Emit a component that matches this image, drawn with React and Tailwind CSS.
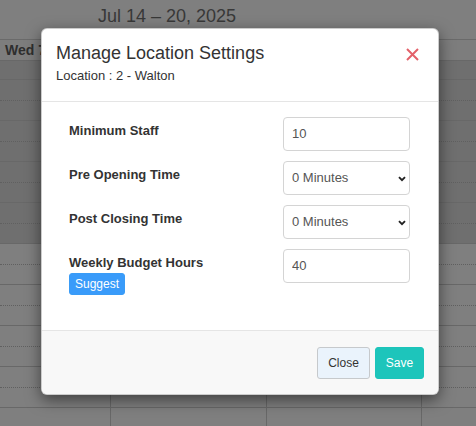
import React from 'react';

const rows = Array.from({ length: 18 }, (_, i) => i);

function CalendarRow({ i }) {
  const dark = i < 9;
  const dotted = i % 2 === 1;
  return (
    <div
      className={`flex border-b ${dotted ? 'border-dotted border-[#606060]' : 'border-[#686868]'} ${
        dark ? 'bg-[#6f6f6f]' : 'bg-[#7f7f7f]'
      } ${i === 0 ? 'h-[19px]' : 'h-[20.5px]'}`}
    >
      <div className="w-[110px]" />
      <div className="w-[156px] border-l border-[#686868]" />
      <div className="w-[155px] border-l border-[#686868]" />
      <div className="flex-1 border-l border-[#686868]" />
    </div>
  );
}

function Chevron() {
  return (
    <svg width="8" height="6" viewBox="0 0 8 6" className="pointer-events-none absolute right-[4px] top-[15px]">
      <path d="M1 1.2 L4 4.2 L7 1.2" fill="none" stroke="#222" strokeWidth="1.9" />
    </svg>
  );
}

function Field({ label, children, extra }) {
  return (
    <div className="flex justify-between">
      <div className="pt-[4px]">
        <div className="text-[13px] font-bold leading-[20px] text-[#333]">{label}</div>
        {extra}
      </div>
      {children}
    </div>
  );
}

const inputCls =
  'h-[34px] w-[127px] rounded-[4px] border border-[#d4d4d4] bg-white px-[8px] text-[13px] text-[#555] outline-none';

export default function App() {
  return (
    <div className="relative h-[426px] w-[476px] overflow-hidden bg-[#7f7f7f] font-['Liberation_Sans',Arial,sans-serif]">
      {/* calendar behind the overlay */}
      <div className="h-[40px] border-b border-[#6a6a6a] pl-[98px] pt-[5px] text-[18px] leading-[22px] text-[#383838]">
        Jul 14 – 20, 2025
      </div>
      <div className="flex h-[21px] border-b border-[#686868] bg-[#7d7d7d]">
        <div className="w-[110px] overflow-hidden">
          <div className="w-[41px] overflow-hidden whitespace-nowrap pl-[5px] text-[14px] font-bold leading-[20px] text-[#2e2e2e]">
            Wed 7
          </div>
        </div>
        <div className="w-[156px] border-l border-[#6c6c6c]" />
        <div className="w-[155px] border-l border-[#6c6c6c]" />
        <div className="flex-1 border-l border-[#6c6c6c]" />
      </div>
      {rows.map((i) => (
        <CalendarRow key={i} i={i} />
      ))}

      {/* modal */}
      <div className="absolute left-[41px] top-[28px] flex h-[367px] w-[398px] flex-col overflow-hidden rounded-[6px] border border-black/20 bg-white shadow-[0_5px_15px_rgba(0,0,0,0.5)]">
        <div className="relative border-b border-[#e5e5e5] px-[14px] pb-[15px] pt-[15px]">
          <div className="text-[18px] leading-[19.8px] text-[#333]">Manage Location Settings</div>
          <div className="mt-[2px] text-[13px] leading-[20px] text-[#333]">Location : 2 - Walton</div>
          <button className="absolute right-[19px] top-[19px]">
            <svg width="13" height="13" viewBox="0 0 13 13">
              <path d="M1 1 L12 12 M12 1 L1 12" stroke="#e3616a" strokeWidth="2" />
            </svg>
          </button>
        </div>

        <div className="flex flex-1 flex-col gap-[10px] pl-[27px] pr-[28px] pt-[15px]">
          <Field label="Minimum Staff">
            <input className={inputCls} defaultValue="10" />
          </Field>
          <Field label="Pre Opening Time">
            <div className="relative">
              <select className={`${inputCls} appearance-none`} defaultValue="0">
                <option value="0">0 Minutes</option>
              </select>
              <Chevron />
            </div>
          </Field>
          <Field label="Post Closing Time">
            <div className="relative">
              <select className={`${inputCls} appearance-none`} defaultValue="0">
                <option value="0">0 Minutes</option>
              </select>
              <Chevron />
            </div>
          </Field>
          <Field
            label="Weekly Budget Hours"
            extra={
              <button className="block h-[22px] rounded-[3px] border border-[#3a9cf6] bg-[#399bfa] px-[5px] text-[12px] leading-[18px] text-white">
                Suggest
              </button>
            }
          >
            <input className={inputCls} defaultValue="40" />
          </Field>
        </div>

        <div className="flex h-[64px] justify-end gap-[5px] border-t border-[#e5e5e5] bg-[#f8f8f8] pr-[14px] pt-[16px]">
          <button className="h-[32px] w-[53px] rounded-[3px] border border-[#c6c9cc] bg-[#eaf3fc] text-[12px] text-[#333]">
            Close
          </button>
          <button className="h-[32px] w-[49px] rounded-[3px] border border-[#1cc4ba] bg-[#1dc5bb] text-[12px] text-white">
            Save
          </button>
        </div>
      </div>
    </div>
  );
}
